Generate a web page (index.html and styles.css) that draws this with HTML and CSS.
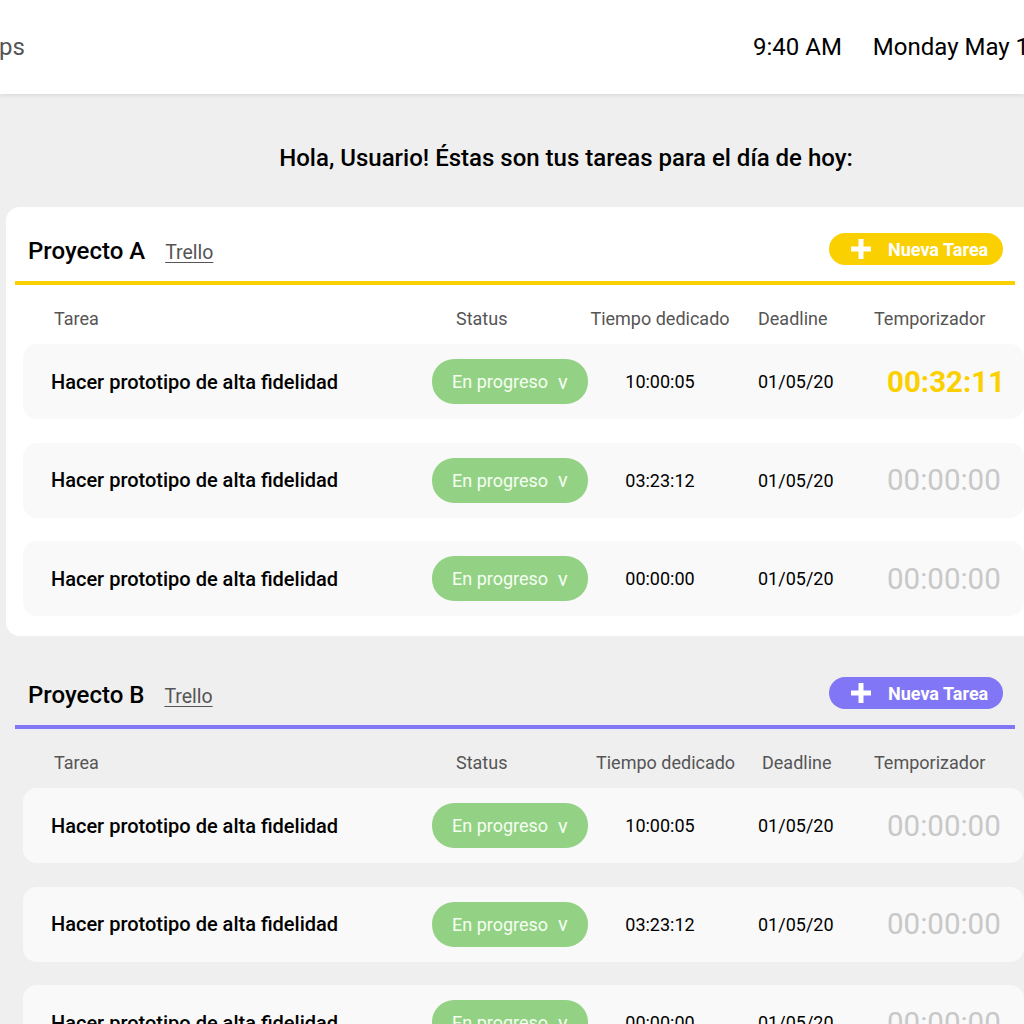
FILE: index.html
```html
<!DOCTYPE html>
<html lang="es">
<head>
<meta charset="utf-8">
<title>Tareas</title>
<link rel="stylesheet" href="styles.css">
</head>
<body>
<header class="topbar">
  <div class="brand">ps</div>
  <div class="clock">
    <span class="time">9:40 AM</span>
    <span class="date">Monday May 18</span>
  </div>
</header>

<main class="page">
  <h1 class="greeting">Hola, Usuario! Éstas son tus tareas para el día de hoy:</h1>

  <section class="project project-a">
    <div class="project-head">
      <div class="project-title"><h2>Proyecto A</h2><a href="#" class="trello">Trello</a></div>
      <button class="new-task"><svg viewBox="0 0 20 20" width="20" height="20"><path d="M10 0v20M0 10h20" stroke="#fff" stroke-width="5"/></svg><span>Nueva Tarea</span></button>
    </div>
    <div class="rule"></div>
    <div class="cols">
      <span class="c-task">Tarea</span>
      <span class="c-status">Status</span>
      <span class="c-time">Tiempo dedicado</span>
      <span class="c-dead">Deadline</span>
      <span class="c-timer">Temporizador</span>
    </div>
    <div class="rows">
      <div class="row">
        <span class="task">Hacer prototipo de alta fidelidad</span>
        <span class="status">En progreso <i>v</i></span>
        <span class="spent">10:00:05</span>
        <span class="deadline">01/05/20</span>
        <span class="timer active">00:32:11</span>
      </div>
      <div class="row">
        <span class="task">Hacer prototipo de alta fidelidad</span>
        <span class="status">En progreso <i>v</i></span>
        <span class="spent">03:23:12</span>
        <span class="deadline">01/05/20</span>
        <span class="timer">00:00:00</span>
      </div>
      <div class="row">
        <span class="task">Hacer prototipo de alta fidelidad</span>
        <span class="status">En progreso <i>v</i></span>
        <span class="spent">00:00:00</span>
        <span class="deadline">01/05/20</span>
        <span class="timer">00:00:00</span>
      </div>
    </div>
  </section>

  <section class="project project-b">
    <div class="project-head">
      <div class="project-title"><h2>Proyecto B</h2><a href="#" class="trello">Trello</a></div>
      <button class="new-task"><svg viewBox="0 0 20 20" width="20" height="20"><path d="M10 0v20M0 10h20" stroke="#fff" stroke-width="5"/></svg><span>Nueva Tarea</span></button>
    </div>
    <div class="rule"></div>
    <div class="cols cols-b">
      <span class="c-task">Tarea</span>
      <span class="c-status">Status</span>
      <span class="c-time">Tiempo dedicado</span>
      <span class="c-dead">Deadline</span>
      <span class="c-timer">Temporizador</span>
    </div>
    <div class="rows">
      <div class="row">
        <span class="task">Hacer prototipo de alta fidelidad</span>
        <span class="status">En progreso <i>v</i></span>
        <span class="spent">10:00:05</span>
        <span class="deadline">01/05/20</span>
        <span class="timer">00:00:00</span>
      </div>
      <div class="row">
        <span class="task">Hacer prototipo de alta fidelidad</span>
        <span class="status">En progreso <i>v</i></span>
        <span class="spent">03:23:12</span>
        <span class="deadline">01/05/20</span>
        <span class="timer">00:00:00</span>
      </div>
      <div class="row">
        <span class="task">Hacer prototipo de alta fidelidad</span>
        <span class="status">En progreso <i>v</i></span>
        <span class="spent">00:00:00</span>
        <span class="deadline">01/05/20</span>
        <span class="timer">00:00:00</span>
      </div>
    </div>
  </section>
</main>
</body>
</html>
```
FILE: styles.css
```css
* { box-sizing: border-box; }
html, body { margin: 0; padding: 0; }
body {
  background: #efefef;
  font-family: Roboto, "Noto Sans", sans-serif;
  color: #000;
  overflow: hidden;
  width: 1024px;
  height: 1024px;
}

.topbar {
  height: 94px;
  background: #fff;
  box-shadow: 0 2px 4px rgba(0,0,0,0.08);
  display: flex;
  align-items: center;
  white-space: nowrap;
  position: relative;
  z-index: 1;
}
.brand {
  font-size: 24px;
  color: #555;
  margin-left: -1px;
  width: 754px;
  flex-shrink: 0;
}
.clock { display: flex; gap: 31px; font-size: 24px; color: #000; }

.page { width: 1132px; }
.greeting {
  margin: 0;
  padding-top: 50px;
  height: 113px;
  text-align: center;
  font-size: 24px;
  font-weight: 500;
  line-height: 28px;
}

.project {
  width: 1040px;
  margin-left: 6px;
  padding: 26px 0 20px 0;
  border-radius: 14px;
}
.project-a { background: #fff; }
.project-b { margin-top: 15px; }

.project-head {
  display: flex;
  align-items: center;
  width: 997px;
  height: 32px;
}
.project-title { display: flex; align-items: baseline; padding: 4px 0 0 22px; flex: 1; }
.project-title h2 {
  margin: 0;
  font-size: 24px;
  font-weight: 500;
  margin-right: 20px;
}
.trello { font-size: 19.5px; color: #555; text-decoration: underline; text-underline-offset: 3px; }

.new-task {
  display: flex;
  align-items: center;
  width: 174px;
  height: 32px;
  border: 0;
  border-radius: 16px;
  padding: 0 0 0 22px;
  font-family: Roboto, sans-serif;
  font-size: 18px;
  font-weight: 700;
  color: #fff;
  gap: 17px;
}
.project-a .new-task { background: #fad000; }
.project-b .new-task { background: #8176f6; }

.rule { margin: 16px 0 0 9px; width: 1000px; height: 4px; }
.project-a .rule { background: #fad000; }
.project-b .rule { background: #8176f6; }

.cols, .row {
  display: grid;
  grid-template-columns: 409px 156px 144px 155px 1fr;
  align-items: center;
  margin-left: 17px;
  width: 1001px;
}
.cols {
  margin-top: 23px;
  height: 20px;
  font-size: 18px;
  color: #555;
  white-space: nowrap;
}
.c-task { padding-left: 31px; }
.c-status { padding-left: 24px; }
.c-time { text-align: center; }
.c-dead { padding-left: 26px; }
.c-timer { margin-left: -13px; }
.cols-b .c-time { padding-left: 8px; }
.cols-b .c-dead { padding-left: 30px; }

.rows { display: flex; flex-direction: column; gap: 23.5px; margin-top: 16px; }
.row {
  height: 75px;
  background: #f9f9f9;
  border-radius: 14px;
}
.task { padding-left: 28px; font-size: 20px; font-weight: 500; white-space: nowrap; }
.status {
  height: 45px;
  border-radius: 22px;
  background: #93d285;
  color: #f6fff2;
  font-size: 18px;
  display: flex;
  align-items: center;
  padding-left: 20px;
  white-space: nowrap;
}
.status i { font-style: normal; margin-left: 10px; font-size: 20px; }
.spent { text-align: center; font-size: 18px; }
.deadline { padding-left: 26px; font-size: 18px; }
.timer { font-size: 29.5px; color: #c8c8c8; white-space: nowrap; }
.timer.active { color: #fad000; font-weight: 700; }
```
